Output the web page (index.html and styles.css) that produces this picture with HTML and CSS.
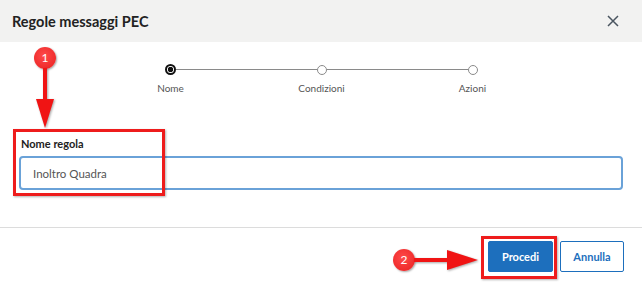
FILE: index.html
```html
<!DOCTYPE html>
<html lang="it">
<head>
    <meta charset="UTF-8">
    <title>Regole messaggi PEC</title>
    <link rel="stylesheet" href="styles.css">
</head>
<body>
    <div class="dialog">
        <div class="dialog_head">
            <h1>Regole messaggi PEC</h1>
            <span class="close">
                <svg width="12" height="12" viewBox="0 0 12 12"><path d="M1 1L11 11M11 1L1 11" stroke="#4a5560" stroke-width="1.5" fill="none"/></svg>
            </span>
        </div>
        <div class="dialog_body">
            <div class="steps">
                <span class="dot dot_on"></span>
                <span class="track"></span>
                <span class="dot"></span>
                <span class="track"></span>
                <span class="dot"></span>
            </div>
            <div class="step_names">
                <span>Nome</span>
                <span>Condizioni</span>
                <span>Azioni</span>
            </div>
            <div class="field">
                <label for="rule">Nome regola</label>
                <input type="text" id="rule" value="Inoltro Quadra">
            </div>
        </div>
        <div class="dialog_foot">
            <button class="btn btn_main">Procedi</button>
            <button class="btn">Annulla</button>
        </div>

        <!-- annotazioni -->
        <div class="mark mark_1">1</div>
        <div class="arrow_down"></div>
        <div class="frame frame_field"></div>
        <div class="mark mark_2">2</div>
        <div class="arrow_right"></div>
        <div class="frame frame_btn"></div>
    </div>
</body>
</html>
```

FILE: styles.css
```css
*{
    margin: 0;
    padding: 0;
    box-sizing: border-box;
}
body{
    width: 642px;
    height: 284px;
    font-family: Lato, "Liberation Sans", sans-serif;
    background: #fff;
    overflow: hidden;
}
.dialog{
    position: relative;
    height: 284px;
}
.dialog_head{
    display: flex;
    align-items: center;
    justify-content: space-between;
    height: 42px;
    padding: 0 23px 0 12px;
    background-color: #f2f2f1;
}
.dialog_head h1{
    font-size: 14.5px;
    font-weight: bold;
    color: #222;
}
.close{
    display: flex;
}
.dialog_body{
    height: 186px;
    padding: 22px 19px 0;
    border-bottom: 1px solid #dcdcdc;
}
.steps{
    display: flex;
    align-items: center;
    margin-left: 146px;
    height: 11px;
}
.dot{
    width: 10px;
    height: 10px;
    border-radius: 50%;
    border: 1.5px solid #8a8a8a;
    background: #fff;
}
.dot_on{
    width: 11px;
    height: 11px;
    border: 2px solid #111;
    background: radial-gradient(circle, #111 0 2.5px, #fff 3px);
}
.track{
    width: 141px;
    height: 1.5px;
    background-color: #8a8a8a;
}
.step_names{
    display: grid;
    grid-template-columns: repeat(3, 151px);
    margin: 7px 0 0 76px;
    font-size: 10px;
    color: #555;
    text-align: center;
    line-height: 12px;
}
.field{
    margin-top: 43px;
}
.field label{
    display: block;
    margin: 0 0 6px 2px;
    font-size: 11px;
    font-weight: bold;
    line-height: 13px;
    color: #222;
}
.field input{
    display: block;
    width: 604px;
    height: 34px;
    padding: 0 12px;
    border: 2px solid #6aa2d8;
    border-radius: 4px;
    font-family: Lato, "Liberation Sans", sans-serif;
    font-size: 11.5px;
    color: #555;
    outline: none;
}
.dialog_foot{
    display: flex;
    justify-content: flex-end;
    gap: 7px;
    padding: 13px 18px 0;
}
.btn{
    height: 31px;
    width: 64px;
    border: 1.5px solid #1d6fbd;
    border-radius: 2px;
    background: #fff;
    font-family: Lato, "Liberation Sans", sans-serif;
    font-size: 11px;
    font-weight: bold;
    color: #1d6fbd;
}
.btn_main{
    width: 65px;
    background: #1d6fbd;
    color: #fff;
}
.mark{
    position: absolute;
    width: 22px;
    height: 22px;
    border-radius: 50%;
    background: radial-gradient(circle at 45% 40%, #ff4a4a, #e81f1f);
    box-shadow: 1px 1px 2px rgba(0,0,0,.35);
    color: #fff;
    font-size: 12px;
    text-align: center;
    line-height: 22px;
}
.mark_1{
    left: 34px;
    top: 47px;
}
.mark_2{
    left: 393px;
    top: 249px;
}
.arrow_down{
    position: absolute;
    left: 36px;
    top: 68px;
    width: 18px;
    height: 60px;
    background: linear-gradient(#f01414, #f01414) center top / 4px 32px no-repeat;
    filter: drop-shadow(1px 1px 1px rgba(0,0,0,.35));
}
.arrow_down::after{
    content: '';
    position: absolute;
    left: 0;
    bottom: 0;
    border-left: 9px solid transparent;
    border-right: 9px solid transparent;
    border-top: 29px solid #f01414;
}
.arrow_right{
    position: absolute;
    left: 414px;
    top: 250px;
    width: 64px;
    height: 20px;
    background: linear-gradient(#f01414, #f01414) left center / 34px 4px no-repeat;
    filter: drop-shadow(1px 1px 1px rgba(0,0,0,.35));
}
.arrow_right::after{
    content: '';
    position: absolute;
    right: 0;
    top: 0;
    border-top: 10px solid transparent;
    border-bottom: 10px solid transparent;
    border-left: 31px solid #f01414;
}
.frame{
    position: absolute;
    border: 3px solid #ee1c1c;
    box-shadow: 1px 1px 2px rgba(0,0,0,.3);
}
.frame_field{
    left: 13px;
    top: 129px;
    width: 152px;
    height: 67px;
}
.frame_btn{
    left: 481px;
    top: 236px;
    width: 76px;
    height: 43px;
}
```
